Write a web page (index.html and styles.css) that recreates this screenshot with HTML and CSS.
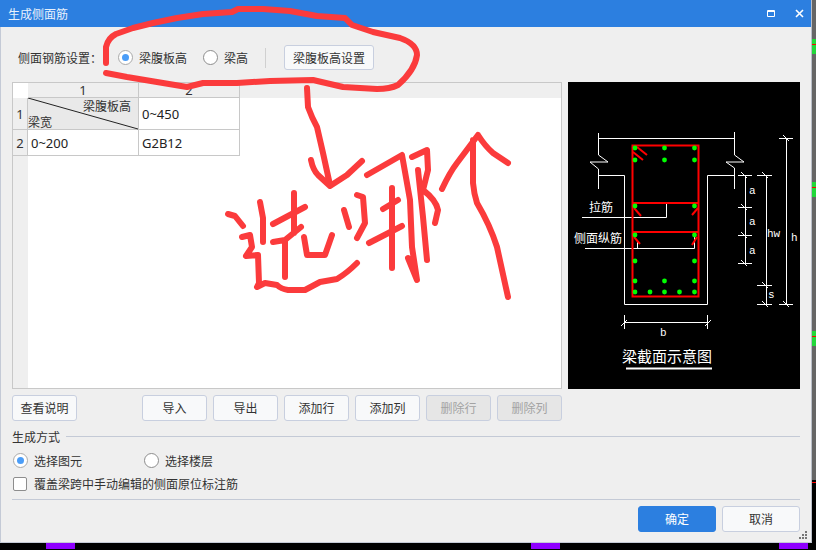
FILE: index.html
```html
<!DOCTYPE html>
<html lang="zh">
<head>
<meta charset="utf-8">
<title>生成侧面筋</title>
<link rel="stylesheet" href="styles.css">
</head>
<body>
<div class="desk">
  <div class="window">
    <header class="titlebar">
      <span class="title">生成侧面筋</span>
      <svg class="tb-icon tb-max" width="8" height="7" viewBox="0 0 8 7"><path d="M.5.5h7v6h-7z M0 1.5h8" fill="none" stroke="#fff"/></svg>
      <svg class="tb-icon tb-close" width="9" height="9" viewBox="0 0 9 9"><path d="M1 1l7 7M8 1L1 8" fill="none" stroke="#fff" stroke-width="1.6"/></svg>
    </header>
    <div class="content">
      <div class="settings">
        <span class="settings-label">侧面钢筋设置：</span>
        <label class="opt opt-a"><i class="radio on"></i>梁腹板高</label>
        <label class="opt opt-b"><i class="radio"></i>梁高</label>
        <i class="vsep"></i>
        <button class="btn btn-set">梁腹板高设置</button>
      </div>

      <div class="main">
        <div class="sheet">
          <div class="cell corner"></div>
          <div class="cell head">1</div>
          <div class="cell head">2</div>
          <div class="head-fill"></div>
          <div class="cell rowhead">1</div>
          <div class="cell diag">
            <svg class="diag-line" width="111" height="32" viewBox="0 0 111 32"><path d="M0 0L110 31" stroke="#222" fill="none"/></svg>
            <span class="diag-a">梁腹板高</span>
            <span class="diag-b">梁宽</span>
          </div>
          <div class="cell data">0~450</div>
          <div class="blank"></div>
          <div class="cell rowhead">2</div>
          <div class="cell data data-first">0~200</div>
          <div class="cell data">G2B12</div>
          <div class="rail"></div>
        </div>

        <svg class="figure" width="232" height="307" viewBox="568 82 232 307">
          <g class="w">
            <path d="M598.5 133V155L608 162H590L598.5 169V189"/>
            <path d="M734.5 132V155L744 162H726L734.5 168V189"/>
            <path d="M598.5 138.500H734.500"/>
            <path d="M598 175.500H624.500V304.500H707.500V175.500H734"/>
            <path d="M582 217.500H666.500V203"/>
            <path d="M585 248.500H694.500V237M637.500 240V248"/>
            <path d="M745.500 175V263M738 175.500H752M738 207.500H752M738 235.500H752M738 263.500H752"/>
            <path d="M766.500 175V304M757 175.500H772M757 285.500H772M757 304.500H772"/>
            <path d="M786.500 138V304M779 138.500H793M779 304.500H793"/>
            <path d="M624.500 315V329M707.500 315V329M624 322.500H708"/>
            <path d="M741 172l6 6M762 172l6 6M783 135l6 6M741 204l6 6M741 232l6 6M741 260l6 6M762 282l6 6M762 301l6 6M783 301l6 6M621 326l6-6M705 326l6-6"/>
            <path class="thick" d="M626 368.500H712"/>
          </g>
          <g class="r">
            <path d="M632.500 145.500H698.500V296.500H632.500Z"/>
            <path d="M632 203H699M632 232H699"/>
            <path d="M637 147L647 155M633 152L643 160M634 208L641 216M698 208L692 215M634 237L640 244M697 237L692 245"/>
          </g>
          <g class="g">
            <circle cx="635" cy="148" r="2.400"/><circle cx="664.500" cy="148" r="2.400"/><circle cx="694.500" cy="148" r="2.400"/>
            <circle cx="635" cy="160" r="2.400"/><circle cx="664.500" cy="160" r="2.400"/><circle cx="694.500" cy="160" r="2.400"/>
            <circle cx="635" cy="206" r="2.400"/><circle cx="694.500" cy="206" r="2.400"/>
            <circle cx="635" cy="235" r="2.400"/><circle cx="694.500" cy="235" r="2.400"/>
            <circle cx="635" cy="261" r="2.400"/><circle cx="694.500" cy="261" r="2.400"/>
            <circle cx="635" cy="281" r="2.400"/><circle cx="664.500" cy="281" r="2.400"/><circle cx="694.500" cy="281" r="2.400"/>
            <circle cx="635" cy="292" r="2.400"/><circle cx="650" cy="292" r="2.400"/><circle cx="664.500" cy="292" r="2.400"/><circle cx="679.500" cy="292" r="2.400"/><circle cx="694.500" cy="292" r="2.400"/>
          </g>
          <text class="cn" x="589" y="212">拉筋</text>
          <text class="cn" x="574" y="243">侧面纵筋</text>
          <text class="cn-big" x="622" y="362">梁截面示意图</text>
          <text class="lat" x="749" y="194">a</text>
          <text class="lat" x="749" y="225">a</text>
          <text class="lat" x="749" y="254">a</text>
          <text class="lat" x="767" y="237">hw</text>
          <text class="lat" x="791" y="241">h</text>
          <text class="lat" x="768" y="298">s</text>
          <text class="lat" x="660" y="336">b</text>
        </svg>
      </div>

      <div class="toolbar">
        <button class="btn btn-help">查看说明</button>
        <div class="tools">
          <button class="btn btn-tool">导入</button>
          <button class="btn btn-tool">导出</button>
          <button class="btn btn-tool">添加行</button>
          <button class="btn btn-tool">添加列</button>
          <button class="btn btn-tool off">删除行</button>
          <button class="btn btn-tool off">删除列</button>
        </div>
      </div>

      <div class="legend"><span>生成方式</span><i class="rule"></i></div>
      <div class="modes">
        <label class="opt mode"><i class="radio on"></i>选择图元</label>
        <label class="opt"><i class="radio"></i>选择楼层</label>
      </div>
      <label class="opt check-row"><i class="check"></i>覆盖梁跨中手动编辑的侧面原位标注筋</label>
      <div class="hr"></div>
      <div class="footer">
        <button class="btn btn-foot primary">确定</button>
        <button class="btn btn-foot">取消</button>
      </div>
    </div>
    <svg class="grip" width="9" height="8" viewBox="0 0 9 8"><path d="M6 0h2v2H6zM3 3h2v2H3zM6 3h2v2H6zM0 6h2v2H0zM3 6h2v2H3zM6 6h2v2H6z" fill="#777"/></svg>
  </div>

  <div class="strip">
    <i class="mark mark-1"></i>
    <i class="mark mark-2"></i>
    <i class="mark mark-3"></i>
    <i class="strip-black"></i>
  </div>
  <div class="floor">
    <i class="seg seg-1"></i>
    <i class="seg seg-2"></i>
    <i class="seg seg-3"></i>
  </div>

  <svg class="ink" width="816" height="550" viewBox="0 0 816 550">
    <path d="M106 63L106 47Q108 38 116 34L133 28L153 23L177 18L203 14L232 12L238 9L263 9L290 11L317 16L345 18L352 25L373 32L400 38Q417 44 417 55Q415 70 398 85Q390 89 377 89L343 87L313 80L270 81L237 83L203 83L187 87L157 82L127 77L106 73"/>
    <path d="M307 88L308 107Q312 118 317 127L323 153L330 185M311 160Q313 170 318 175L330 186L347 175L362 161"/>
    <path d="M228 214L235 216L243 226M242 237L250 235L252 247L246 256L258 255L259 283L257 287L265 283L277 285Q281 289 288 290L305 290L320 282L337 279Q347 273 357 263"/>
    <path d="M260 202L263 218L263 242M294 193L294 233M273 224L305 207M273 242L285 240L301 227M285 240L285 277M304 237L307 255L325 255L332 235"/>
    <path d="M344 210L349 227M357 195L363 197L365 223L357 238M383 209L398 200M392 188L392 268M369 243L402 226"/>
    <path d="M367 175L402 155L410 200L412 247L417 280L408 258M412 157L427 150L428 170L423 190Q436 200 438 210L435 223M418 170L423 217L427 260"/>
    <path d="M442 189Q450 172 457 163L478 135Q485 146 493 153L508 163M473 140L473 183Q474 194 477 203Q490 225 497 247L508 297"/>
  </svg>
</div>
</body>
</html>
```

FILE: styles.css
```css
* { box-sizing: border-box; }
html, body { margin: 0; padding: 0; background: #000; overflow: hidden; }
body { font: 12px/16px "Noto Sans CJK SC", "Noto Sans", sans-serif; color: #333; }
i { display: block; font-style: normal; }

.desk {
  position: relative;
  width: 816px;
  height: 550px;
  display: grid;
  grid-template-columns: 812px 4px;
  grid-template-rows: 543px 7px;
  background: #000;
}

.window {
  position: relative;
  background: #efefef;
  display: flex;
  flex-direction: column;
  border-right: 1px solid #b9bec8;
  border-bottom: 1px solid #c4cad6;
}

.titlebar {
  height: 27px;
  flex: none;
  background: #2c7fe0;
  color: #fff;
  display: flex;
  align-items: center;
  padding-left: 8px;
}
.title { color: #e8f1fc; }
.tb-icon { flex: none; }
.tb-max { margin-left: auto; }
.tb-close { margin: 0 7px 0 20px; }

.content {
  flex: 1;
  border-left: 1px solid #c4cad6;
  padding: 18px 11px 0 11px;
  display: flex;
  flex-direction: column;
}

.settings { display: flex; align-items: center; height: 25px; }
.settings-label { margin-left: 6px; width: 100px; }

.opt { display: flex; align-items: center; gap: 6px; }
.opt-a { margin-right: 16px; }
.opt-b { margin-right: 17px; }

.radio {
  width: 15px;
  height: 15px;
  border: 1px solid #8d8d8d;
  border-radius: 50%;
  background: #fff;
  flex: none;
  position: relative;
}
.radio.on { border-color: #a9a9a9; }
.radio.on::after {
  content: "";
  position: absolute;
  left: 3px;
  top: 3px;
  width: 7px;
  height: 7px;
  border-radius: 50%;
  background: #4b9df7;
}
.vsep { width: 1px; height: 20px; background: #d0d0d0; margin-right: 18px; }

.btn {
  font: inherit;
  color: #333;
  background: #f8f9fa;
  border: 1px solid #c8cfdf;
  border-radius: 3px;
  padding: 0;
  height: 26px;
}
.btn-set { width: 90px; height: 25px; }

.main { display: flex; gap: 6px; margin-top: 12px; }

.sheet {
  width: 550px;
  height: 307px;
  background: #fff;
  border: 1px solid #c8c8c8;
  display: grid;
  grid-template-columns: 15px 111px 101px 1fr;
  grid-template-rows: 15px 32px 26px 1fr;
  flex: none;
}
.cell { border-right: 1px solid #c8c8c8; border-bottom: 1px solid #c8c8c8; display: flex; align-items: center; }
.corner { background: #fff; border-right: 0; border-bottom: 0; }
.head { background: #efefef; justify-content: center; line-height: 14px; font-size: 13px; font-family: "Noto Sans", sans-serif; }
.head-fill { background: #efefef; }
.rowhead { background: #efefef; justify-content: center; font-size: 13px; font-family: "Noto Sans", sans-serif; }
.blank { grid-column: 4; grid-row: 2 / 5; }
.rail { grid-column: 1; grid-row: 4; background: #efefef; }
.data { padding-left: 3px; color: #222; font-size: 13px; font-family: "Noto Sans", "Noto Sans CJK SC", sans-serif; }
.data-first { padding-left: 3px; }
.diag { position: relative; background: #e9e9e9; }
.diag-line { position: absolute; left: 0; top: 0; }
.diag-a { position: absolute; right: 7px; top: 0; }
.diag-b { position: absolute; left: 0; bottom: -1px; }

.figure { display: block; background: #000; flex: none; }
.figure path { fill: none; }
.w path { stroke: #fff; stroke-width: 1; }
.w .thick { stroke-width: 2; }
.r path { stroke: #f00; stroke-width: 2; }
.g circle { fill: #0f0; }
.cn { font-size: 12px; fill: #fff; font-family: "Noto Sans CJK SC", sans-serif; }
.cn-big { font-size: 15px; fill: #fff; font-family: "Noto Sans CJK SC", sans-serif; }
.lat { font-size: 11px; fill: #fff; font-family: "Liberation Mono", monospace; }

.toolbar { display: flex; margin-top: 6px; }
.btn-help { width: 65px; }
.tools { display: flex; gap: 6px; margin-left: 65px; }
.btn-tool { width: 65px; }
.btn-tool.off { background: #e6e6e6; color: #a3a3a3; }

.legend { display: flex; align-items: center; gap: 6px; margin-top: 6px; height: 20px; width: 788px; }
.rule { flex: 1; height: 1px; background: #c4cad6; margin-top: -2px; }

.modes { display: flex; margin: 6px 0 0 1px; height: 15px; }
.mode { width: 131px; }
.check-row { margin: 8px 0 0 1px; height: 15px; gap: 7px; }
.check { width: 14px; height: 14px; background: #fff; border: 1px solid #8d8d8d; border-radius: 2px; flex: none; }
.hr { height: 1px; background: #c4cad6; margin-top: 8px; width: 788px; }

.footer { display: flex; justify-content: flex-end; gap: 6px; margin-top: 6px; width: 788px; }
.btn-foot { width: 78px; }
.primary { background: #2c7fe0; border-color: #2c7fe0; color: #fff; }

.grip { position: absolute; right: 3px; bottom: 3px; }

.strip { position: relative; background: #666; }
.strip-black { position: absolute; left: 0; right: 0; top: 480px; bottom: 0; background: #000; border-top: 0; }
.strip-black::before { content: ""; display: block; height: 1px; background: #f00; margin-top: 2px; }
.mark { position: absolute; left: 0; right: 0; height: 15px; background: #22d83a; }
.mark::before { content: ""; display: block; height: 1px; background: #f00; margin-top: 5px; }
.mark-1 { top: 39px; }
.mark-2 { top: 182px; }
.mark-3 { top: 331px; }

.floor { position: relative; grid-column: 1 / 3; background: #000; }
.seg { position: absolute; top: 0; height: 6px; width: 29px; background: #8f00ff; }
.seg-1 { left: 46px; }
.seg-2 { left: 531px; }
.seg-3 { left: 779px; }

.ink { position: absolute; left: 0; top: 0; pointer-events: none; }
.ink path { fill: none; stroke: #fb3b3c; stroke-width: 6; stroke-linecap: round; stroke-linejoin: round; }
```
